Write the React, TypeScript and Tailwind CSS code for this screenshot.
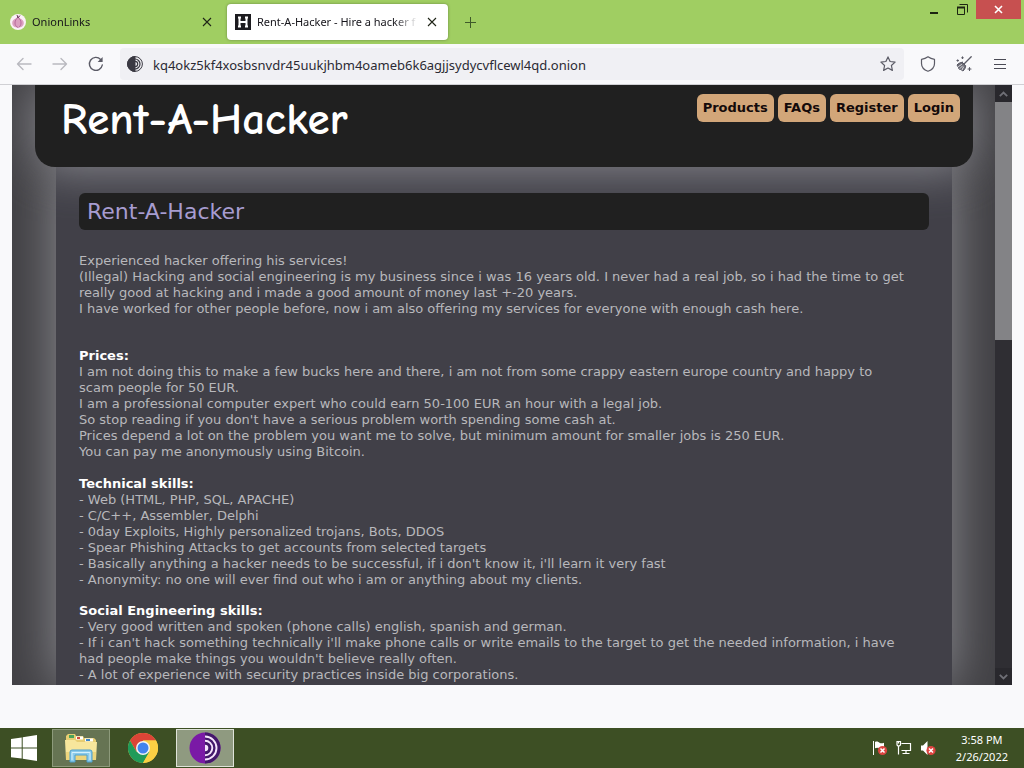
import type { ReactNode } from 'react'

const uiFont = "font-['Segoe_UI','Noto_Sans','Open_Sans',sans-serif]"
const pageFont = "font-['Verdana','DejaVu_Sans',sans-serif]"

const navLinks = ['Products', 'FAQs', 'Register', 'Login']

const sections: { title?: string; gap: string; lines: string[] }[] = [
  {
    gap: 'mt-0',
    lines: [
      'Experienced hacker offering his services!',
      '(Illegal) Hacking and social engineering is my business since i was 16 years old. I never had a real job, so i had the time to get',
      'really good at hacking and i made a good amount of money last +-20 years.',
      'I have worked for other people before, now i am also offering my services for everyone with enough cash here.',
    ],
  },
  {
    title: 'Prices:',
    gap: 'mt-[31px]',
    lines: [
      'I am not doing this to make a few bucks here and there, i am not from some crappy eastern europe country and happy to',
      'scam people for 50 EUR.',
      'I am a professional computer expert who could earn 50-100 EUR an hour with a legal job.',
      "So stop reading if you don't have a serious problem worth spending some cash at.",
      'Prices depend a lot on the problem you want me to solve, but minimum amount for smaller jobs is 250 EUR.',
      'You can pay me anonymously using Bitcoin.',
    ],
  },
  {
    title: 'Technical skills:',
    gap: 'mt-4',
    lines: [
      '- Web (HTML, PHP, SQL, APACHE)',
      '- C/C++, Assembler, Delphi',
      '- 0day Exploits, Highly personalized trojans, Bots, DDOS',
      '- Spear Phishing Attacks to get accounts from selected targets',
      "- Basically anything a hacker needs to be successful, if i don't know it, i'll learn it very fast",
      '- Anonymity: no one will ever find out who i am or anything about my clients.',
    ],
  },
  {
    title: 'Social Engineering skills:',
    gap: 'mt-[15px]',
    lines: [
      '- Very good written and spoken (phone calls) english, spanish and german.',
      "- If i can't hack something technically i'll make phone calls or write emails to the target to get the needed information, i have",
      "had people make things you wouldn't believe really often.",
      '- A lot of experience with security practices inside big corporations.',
    ],
  },
]

export default function App() {
  return (
    <div className={`flex h-screen flex-col overflow-hidden bg-[#f9f9fb] ${uiFont}`}>
      <TabBar />
      <Toolbar />
      <div className="mx-3 mb-[43px] flex min-h-0 flex-1">
        <HackerPage />
        <Scrollbar />
      </div>
      <Taskbar />
    </div>
  )
}

function TabBar() {
  return (
    <header className="flex h-11 shrink-0 bg-[#a0ce62] text-[11px] text-[#15141a]">
      <div className="flex items-center gap-1 pl-1">
        <Tab title="OnionLinks" icon={<OnionIcon />} />
        <Tab title="Rent-A-Hacker - Hire a hacker f" icon={<HIcon />} active />
        <button aria-label="New tab" className="ml-1 flex size-7 items-center justify-center">
          <svg width="13" height="13" viewBox="0 0 13 13" stroke="#3f5a2a" fill="none"><path d="M6.5 1v11M1 6.5h11" /></svg>
        </button>
      </div>
      <div className="ml-auto flex h-[19px] pr-[3px]">
        <button aria-label="Minimize" className="flex w-7 items-center justify-center">
          <svg width="10" height="10" viewBox="0 0 10 10"><path d="M1 7h8v2H1z" fill="#1c2412" /></svg>
        </button>
        <button aria-label="Restore" className="flex w-7 items-center justify-center">
          <svg width="11" height="11" viewBox="0 0 11 11" fill="none" stroke="#1c2412">
            <path d="M.5 3.500h7v7h-7z M2.500 .5h8v8" />
            <path d="M0 3.500h8" strokeWidth="2" />
          </svg>
        </button>
        <button aria-label="Close" className="flex w-[45px] items-center justify-center bg-[#c75050]">
          <svg width="9" height="9" viewBox="0 0 9 9" stroke="#fff" strokeWidth="1.6"><path d="M1 1l7 7M8 1L1 8" /></svg>
        </button>
      </div>
    </header>
  )
}

function Tab({ title, icon, active }: { title: string; icon: ReactNode; active?: boolean }) {
  return (
    <div className={`flex h-9 items-center gap-1.5 rounded pr-2 ${active ? 'w-[221px] bg-white pl-2 shadow-[0_0_3px_rgba(0,0,0,0.35)]' : 'w-[219px] pl-1.5'}`}>
      {icon}
      <span className="min-w-0 flex-1 whitespace-nowrap [mask-image:linear-gradient(to_left,transparent,black_24px)]">{title}</span>
      <button aria-label={`Close ${title}`} className="flex size-4 items-center justify-center">
        <svg width="10" height="10" viewBox="0 0 10 10" stroke="#1f2417" strokeWidth="1.1"><path d="M1 1l8 8M9 1L1 9" /></svg>
      </button>
    </div>
  )
}

function Toolbar() {
  return (
    <div className="flex h-[41px] shrink-0 items-center border-b border-[#d0d0d4] pr-4 pl-[14px]">
      <div className="flex w-[106px] items-center gap-4 text-[#5b5b66]">
        <button aria-label="Back" disabled className="flex size-5 items-center justify-center opacity-40"><Arrow /></button>
        <button aria-label="Forward" disabled className="flex size-5 items-center justify-center opacity-40"><Arrow flip /></button>
        <button aria-label="Reload" className="flex size-5 items-center justify-center">
          <svg width="16" height="16" viewBox="0 0 16 16" fill="none" stroke="currentColor" strokeWidth="1.4" strokeLinecap="round">
            <path d="M14.300 9A6.500 6.500 0 1 1 12.600 3.400" />
            <path d="M14.600 1v5h-5z" fill="currentColor" stroke="none" />
          </svg>
        </button>
      </div>
      <div className="flex h-8 flex-1 items-center rounded bg-[#f0f0f4] pr-2 pl-[7px]">
        <svg width="16" height="16" viewBox="0 0 16 16" fill="none" stroke="#3a3942">
          <circle cx="8" cy="8" r="7.400" />
          <path d="M8 3a5 5 0 0 1 0 10M8 5.300a2.700 2.700 0 0 1 0 5.400" strokeWidth="1.200" />
          <path d="M8 .5a7.500 7.500 0 0 0 0 15z" fill="#3a3942" />
        </svg>
        <input
          aria-label="Address"
          defaultValue="kq4okz5kf4xosbsnvdr45uukjhbm4oameb6k6agjjsydycvflcewl4qd.onion"
          className="ml-2.5 h-8 min-w-0 flex-1 bg-transparent pt-0.5 text-[13px] text-[#2b2a33] outline-none"
        />
        <button aria-label="Bookmark this page">
          <svg width="16" height="16" viewBox="0 0 16 16" fill="none" stroke="#5b5b66" strokeWidth="1.200" strokeLinejoin="round">
            <path d="M8 .9l2.100 4.600 5 .6-3.700 3.400 1 4.900L8 12l-4.400 2.400 1-4.900L.9 6.100l5-.6z" />
          </svg>
        </button>
      </div>
      <div className="ml-4 flex items-center gap-5">
        <button aria-label="Security level">
          <svg width="16" height="16" viewBox="0 0 16 16" fill="none" stroke="#5b5b66" strokeWidth="1.200" strokeLinejoin="round">
            <path d="M8 .8c2 1.500 4 2.200 6.500 2.500v4.200c0 3.500-2.600 6.400-6.500 7.800-3.900-1.400-6.500-4.300-6.500-7.800V3.300C4 3 6 2.300 8 .8z" />
          </svg>
        </button>
        <button aria-label="New identity">
          <svg width="16" height="16" viewBox="0 0 16 16" fill="none" stroke="#5b5b66" strokeLinecap="round" strokeLinejoin="round">
            <path d="M15.200.8L8.500 7.500" strokeWidth="1.300" />
            <path d="M6.300 6.300l3.400 3.400c0 2-1 3.800-2.700 5.300L4.500 13.500 3 13l-.5-1.500L1 9c1.500-1.700 3.300-2.600 5.300-2.700z" fill="#6a6a74" />
            <path d="M2.500 10.500l3-2M4 12.500l2.500-2.500M6 14l1.500-3" stroke="#f9f9fb" strokeWidth=".8" />
            <path d="M6.500.9v1.600M5.700 1.700h1.600M1.700 3.700v1.600M.9 4.500h1.600M13.500 11.500v3M12 13h3" strokeWidth="1.100" />
          </svg>
        </button>
        <button aria-label="Menu">
          <svg width="16" height="16" viewBox="0 0 16 16" stroke="#4a4a55"><path d="M2 3.500h12M2 8.500h12M2 12.500h12" /></svg>
        </button>
      </div>
    </div>
  )
}

function Arrow({ flip }: { flip?: boolean }) {
  return (
    <svg width="16" height="14" viewBox="0 0 16 14" fill="none" stroke="currentColor" strokeWidth="1.400" strokeLinecap="round" strokeLinejoin="round" className={flip ? 'rotate-180' : ''}>
      <path d="M15 7H1.500M7 1.500L1.500 7 7 12.500" />
    </svg>
  )
}

function HackerPage() {
  return (
    <div className={`flex min-w-0 flex-1 flex-col overflow-hidden bg-[#414044] ${pageFont}`}>
      <div className="z-10 mr-[22px] ml-[23px] flex h-[82px] shrink-0 items-start justify-between rounded-b-[20px] bg-[#202020] pr-[13px] pl-[26px] shadow-[0_0_50px_#909096]">
        <h1 className="pt-1 font-['Comic_Sans_MS','Comic_Neue','Noto_Sans',cursive] text-[45px] leading-[60px] font-bold text-white">Rent-A-Hacker</h1>
        <nav className="flex gap-1 pt-[9px]">
          {navLinks.map(l => (
            <a key={l} href="#" className="rounded-md bg-[#d2a679] px-1.5 text-[13px] leading-7 font-bold text-[#140a0a]">{l}</a>
          ))}
        </nav>
      </div>
      <main className="mr-[43px] ml-11 flex-1 bg-[#414048] px-[23px] pt-[26px] shadow-[0_0_50px_#909096]">
        <h2 className="relative z-20 rounded-md bg-[#202020] px-2 text-[22px] leading-[37px] text-[#a79cd0]">Rent-A-Hacker</h2>
        <div className="mt-[23px] text-[13px] leading-4 whitespace-nowrap text-[#b8b8bc]">
          {sections.map((s, i) => (
            <section key={i} className={s.gap}>
              {s.title && <h3 className="font-bold text-white">{s.title}</h3>}
              {s.lines.map(t => <p key={t}>{t}</p>)}
            </section>
          ))}
        </div>
      </main>
    </div>
  )
}

function Scrollbar() {
  return (
    <div className="flex w-[17px] shrink-0 flex-col bg-[#2f2e33]">
      <button aria-label="Scroll up" className="flex h-[17px] items-center justify-center bg-[#29282d]"><Chevron /></button>
      <div className="flex-1"><div className="h-[42%] bg-[#838386]" /></div>
      <button aria-label="Scroll down" className="flex h-[17px] items-center justify-center bg-[#29282d]"><Chevron down /></button>
    </div>
  )
}

function Chevron({ down }: { down?: boolean }) {
  return (
    <svg width="9" height="6" viewBox="0 0 9 6" fill="none" stroke="#6f6f76" strokeWidth="1.800" className={down ? 'rotate-180' : ''}>
      <path d="M.8 5.200l3.700-3.700 3.700 3.700" />
    </svg>
  )
}

function Taskbar() {
  return (
    <footer className="flex h-10 shrink-0 items-center bg-[#3d4f24] text-[11px] text-white">
      <button aria-label="Start" className="ml-[11px] w-[41px]">
        <svg width="26" height="26" viewBox="0 0 26 26" fill="#fff"><path d="M0 4l10.700-1.600v10H0zM11.700 2.200L26 0v12.400H11.700zM0 13.400h10.700v10.200L0 22.200zM11.700 13.400H26V26l-14.300-2.200z" /></svg>
      </button>
      <button aria-label="File Explorer" className="flex h-[38px] w-[58px] items-center justify-center border border-[#8d9a7b] bg-[#667453]"><FolderIcon /></button>
      <button aria-label="Google Chrome" className="flex w-[66px] items-center justify-center"><ChromeIcon /></button>
      <button aria-label="Tor Browser" className="flex h-[38px] w-[58px] items-center justify-center border border-[#dfe3d9] bg-[#8f9a80]"><TorIcon /></button>
      <div className="ml-auto flex items-center gap-2">
        <svg width="16" height="16" viewBox="0 0 16 16">
          <path d="M1.500 1v14" stroke="#fff" />
          <path d="M3 2c2-1 3.500 0 4.500.8 1.500.9 3 .6 4.500 0v6c-2 1-3.500.3-4.500-.4C6 7.500 4.500 7.500 3 8.200z" fill="#fff" />
          <RedBadge x={10.5} y={10.5} />
        </svg>
        <svg width="16" height="16" viewBox="0 0 16 16" fill="none" stroke="#fff">
          <path d="M5.500 3.500h9v7h-9M10 10.500v3M6.500 13.500h7M2.500 6.500v8M1 1.500h3.500v3.500l-2 1.500L1 5zM2.500 1.500v2" strokeWidth="1.200" />
        </svg>
        <svg width="16" height="16" viewBox="0 0 16 16">
          <path d="M1 5.500h2L7.500 1v14L3 10.500H1z" fill="#fff" />
          <RedBadge x={11} y={10.5} />
        </svg>
      </div>
      <time className="mr-4 ml-5 text-center leading-[17px]">3:58 PM<br />2/26/2022</time>
    </footer>
  )
}

function RedBadge({ x, y }: { x: number; y: number }) {
  return (
    <g transform={`translate(${x} ${y})`}>
      <circle r="4.600" fill="#dd4440" />
      <path d="M-2-2l4 4M2-2l-4 4" stroke="#fff" strokeWidth="1.500" />
    </g>
  )
}

function OnionIcon() {
  return (
    <svg width="16" height="16" viewBox="0 0 16 16" className="shrink-0">
      <circle cx="8" cy="8" r="8" fill="#fbf1f7" />
      <path d="M7.500 1.500c0 2-.8 2.500-2.300 3.300C3.300 5.800 2.200 7 2.200 9c0 3 2.600 4.600 5.800 4.600s5.800-1.600 5.800-4.600c0-2-1.300-3.200-3.200-4.200C9 4 8.800 3.300 9.600 2z" fill="#dba0c0" />
      <path d="M8 3c-1.500 2-3 3-3 6 0 2 1 3.500 3 4.600M8.500 3.500c1.500 2 2.500 3 2.500 5.500 0 2-1 3.500-2.500 4.600" fill="none" stroke="#a6538c" strokeWidth=".7" />
      <path d="M7 1l1 3 2-2.500" fill="none" stroke="#6d4560" />
    </svg>
  )
}

function HIcon() {
  return (
    <svg width="16" height="16" viewBox="0 0 16 16" className="shrink-0">
      <path d="M0 0h16v16H0z" fill="#1c1b1f" />
      <path d="M4.500 3v10M11.500 3v10M4.500 8h7M3 3.500h3M10 3.500h3M3 12.500h3M10 12.500h3" stroke="#fff" strokeWidth="2" />
    </svg>
  )
}

function FolderIcon() {
  return (
    <svg width="34" height="30" viewBox="0 0 34 30">
      <path d="M2 3l2-2h7l1 2h7l1 2h10l2 2v19H2z" fill="#e7cd72" />
      <path d="M5 2h5v3H5z" fill="#4ba35a" />
      <path d="M12 3.500h7v3h-7z" fill="#fff" />
      <path d="M13 4h3v2h-3z" fill="#d14b3c" />
      <path d="M21 5.500h8v3h-8z" fill="#fff" />
      <path d="M22 6h4v2h-4z" fill="#3f86c7" />
      <path d="M1 7h10l2 2h20l-1 18H2z" fill="#f7e69c" />
      <path d="M2 19h30v8H2z" fill="#edd57c" />
      <path d="M6 29V19q0-2 2-2h18q2 0 2 2v10h-5v-7H11v7z" fill="#8ccbea" stroke="#4c9fcd" />
      <path d="M8 27v-7.500h18V27" fill="none" stroke="#d5f1fc" />
    </svg>
  )
}

function ChromeIcon() {
  return (
    <svg width="30" height="30" viewBox="0 0 30 30">
      <circle cx="15" cy="15" r="15" fill="#f9cf3f" />
      <path d="M2 7.500A15 15 0 0 1 28 7.500H15L8.500 18.800z" fill="#dc4437" />
      <path d="M2 7.500A15 15 0 0 0 15 30l6.500-11.300h-13z" fill="#209b59" />
      <path d="M15 7.500h13A15 15 0 0 1 15 30l6.500-11.300z" fill="#fbd044" />
      <circle cx="15" cy="15" r="7" fill="#f4f5f2" />
      <circle cx="15" cy="15" r="5.500" fill="#4384ee" />
    </svg>
  )
}

function TorIcon() {
  return (
    <svg width="32" height="32" viewBox="0 0 32 32" fill="none">
      <circle cx="16" cy="16" r="15.500" fill="#7a1aa6" />
      <path d="M16 .5a15.500 15.500 0 0 1 0 31z" fill="#43176b" />
      <path d="M16 4.500a11.500 11.500 0 0 1 0 23M16 8.700a7.300 7.300 0 0 1 0 14.600" stroke="#f5e4fb" strokeWidth="1.900" />
      <path d="M16 12.700a3.300 3.300 0 0 1 0 6.600z" fill="#f5e4fb" />
    </svg>
  )
}
